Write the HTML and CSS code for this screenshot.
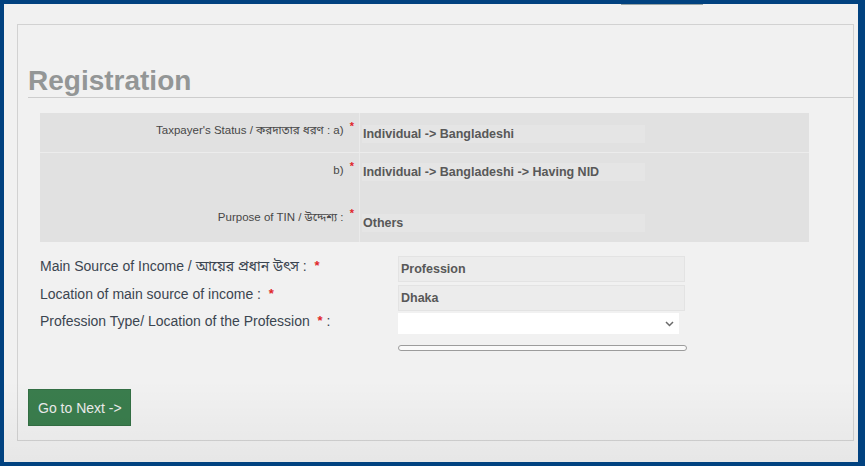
FILE: index.html
```html
<!DOCTYPE html>
<html lang="en">
<head>
<meta charset="utf-8">
<title>Registration</title>
<link rel="stylesheet" href="styles.css">
</head>
<body>
<div class="frame">
  <div class="panel">
    <h1 class="title">Registration</h1>

    <div class="status-table">
      <div class="st-row r1">
        <div class="st-label">Taxpayer's Status / করদাতার ধরণ : a) <span class="req">*</span></div>
        <div class="st-value"><span class="val">Individual -&gt; Bangladeshi</span></div>
      </div>
      <div class="st-row r2">
        <div class="st-label">b) <span class="req">*</span></div>
        <div class="st-value"><span class="val">Individual -&gt; Bangladeshi -&gt; Having NID</span></div>
      </div>
      <div class="st-row r3">
        <div class="st-label">Purpose of TIN / উদ্দেশ্য : <span class="req">*</span></div>
        <div class="st-value"><span class="val">Others</span></div>
      </div>
    </div>

    <div class="form-grid">
      <div class="f-label">Main Source of Income / আয়ের প্রধান উৎস : &nbsp;<span class="req">*</span></div>
      <div class="f-ro">Profession</div>

      <div class="f-label row2">Location of main source of income : &nbsp;<span class="req">*</span></div>
      <div class="f-ro row2">Dhaka</div>

      <div class="f-label row3">Profession Type/ Location of the Profession &nbsp;<span class="req">*</span> :</div>
      <div class="f-select row3">
        <svg class="chev" width="9" height="6" viewBox="0 0 9 6"><polyline points="1,1 4.5,4.5 8,1" fill="none" stroke="#6a6a6a" stroke-width="1.5"/></svg>
      </div>

      <div class="f-spacer"></div>
      <div class="f-bar"></div>
    </div>

    <button class="next" type="button">Go to Next -&gt;</button>
  </div>
</div>
</body>
</html>
```

FILE: styles.css
```css
* { box-sizing: border-box; }

html, body {
  margin: 0;
  padding: 0;
  background: #014280;
}

body {
  font-family: "Liberation Sans", Arial, "Noto Sans Bengali", "Noto Sans", sans-serif;
}

.frame {
  position: relative;
  width: 865px;
  height: 466px;
  border-style: solid;
  border-color: #014280;
  border-width: 4px 7px 4px 4px;
  padding: 20px 4px 21px 13px;
  background: #f1f1f1;
}

.frame::before {
  content: "";
  position: absolute;
  top: 0;
  left: 617px;
  width: 82px;
  height: 1px;
  background: #98a4a6;
}

.frame::after {
  content: "";
  position: absolute;
  left: 0;
  right: 0;
  bottom: 0;
  height: 82px;
  background: linear-gradient(to bottom, rgba(0,0,0,0), rgba(0,0,0,0.045));
  pointer-events: none;
}

.panel {
  height: 100%;
  border: 1px solid #d2d2d2;
}

.title {
  margin: 40px 0 0 10px;
  font-size: 28px;
  line-height: 32px;
  font-weight: bold;
  color: #939696;
  border-bottom: 1px solid #cdcdcd;
}

.status-table {
  margin: 15px 44px 0 22px;
  background: #e1e1e1;
}

.st-row {
  display: grid;
  grid-template-columns: 320px 1fr;
}

.st-row.r1 { height: 39px; }
.st-row.r2 { height: 45px; border-top: 1px solid #ececec; }
.st-row.r3 { height: 45px; }

.st-label {
  text-align: right;
  padding-right: 5px;
  font-size: 11.5px;
  line-height: 15px;
  color: #474747;
  border-right: 1px solid #eaeaea;
}

.st-label .req { margin-left: 3px; font-size: 11px; }

.r1 .st-label { padding-top: 10px; }
.r2 .st-label { padding-top: 10px; }
.r3 .st-label { padding-top: 13px; }

.st-value { padding-left: 2px; }
.r1 .st-value { padding-top: 11px; }
.r2 .st-value { padding-top: 9px; }
.r3 .st-value { padding-top: 16px; }

.val {
  display: inline-block;
  width: 283px;
  line-height: 18px;
  background: #e5e5e5;
  font-size: 12.5px;
  font-weight: bold;
  color: #585858;
  padding-left: 1px;
}

.req {
  color: #e0262a;
  font-size: 12px;
  font-weight: bold;
  position: relative;
  top: -4px;
}

.form-grid {
  margin: 14px 0 0 22px;
  display: grid;
  grid-template-columns: 358px 289px;
}

.f-label {
  font-size: 14px;
  line-height: 16px;
  color: #3b4550;
  padding-top: 2px;
}

.f-label .req { font-size: 13px; top: -1px; }

.f-label.row2 { margin-top: 3px; padding-top: 1px; }
.f-label.row3 { margin-top: 2px; padding-top: 0; }

.f-ro {
  width: 287px;
  height: 26px;
  background: #ececec;
  border: 1px solid #e3e3e3;
  font-size: 12.5px;
  font-weight: bold;
  color: #585858;
  line-height: 24px;
  padding-left: 2px;
}

.f-ro.row2 { margin-top: 3px; }

.f-select {
  width: 281px;
  height: 21px;
  margin-top: 2px;
  background: #ffffff;
  display: flex;
  align-items: center;
  justify-content: flex-end;
  padding-right: 5px;
}

.f-bar {
  width: 289px;
  height: 6px;
  margin-top: 11px;
  border: 1px solid #9c9c9c;
  border-radius: 3px;
  background: #fafafa;
}

.next {
  display: block;
  margin: 38px 0 0 10px;
  width: 103px;
  height: 37px;
  padding: 0 0 0 9px;
  text-align: left;
  background: #3a7d4d;
  border: 1px solid #336f44;
  color: #ececec;
  font-family: "Liberation Sans", Arial, sans-serif;
  font-size: 14px;
  cursor: pointer;
}
```
